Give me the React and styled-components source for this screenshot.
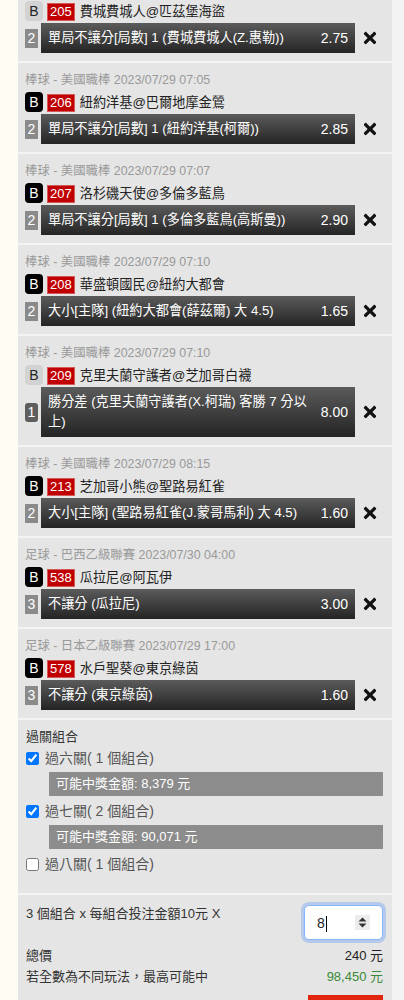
import React from 'react';
import styled, { createGlobalStyle } from 'styled-components';
import { FaTimes } from 'react-icons/fa';

const GlobalStyle = createGlobalStyle`
  body {
    margin: 0;
    background: #fffdf3;
    font-family: "Liberation Sans", "Noto Sans CJK TC", sans-serif;
  }
`;

const Page = styled.div`
  margin: -28px 0 0 18px;
  padding-right: 12px;
  background: #f3f3f3;
  min-height: 1100px;
`;

const Item = styled.div`
  background: #e5e5e5;
  padding: 8px 7px 8px 7px;
  margin-bottom: 2px;
`;

const League = styled.div`
  font-size: 12.4px;
  line-height: 18px;
  color: #999;
  white-space: nowrap;
`;

const Header = styled.div`
  display: flex;
  align-items: center;
  height: 21px;
  margin-top: 2px;
`;

const Badge = styled.span`
  display: flex;
  align-items: center;
  justify-content: center;
  width: 18px;
  height: 20px;
  border-radius: 4px;
  font-size: 14px;
  background: ${p => (p.$light ? '#d2d2d2' : '#000')};
  color: ${p => (p.$light ? '#222' : '#fff')};
`;

const GameNo = styled.span`
  box-sizing: border-box;
  min-width: 26px;
  height: 18px;
  margin: 2px 0 0 4px;
  padding: 0 2px;
  background: #c00000;
  border: 1px solid #d45a5a;
  color: #fff;
  font-size: 13px;
  line-height: 16px;
  text-align: center;
`;

const Team = styled.span`
  margin-left: 5px;
  font-size: 13.2px;
  color: #222;
`;

const BetRow = styled.div`
  display: flex;
  align-items: center;
  margin-top: 2px;
`;

const Seq = styled.span`
  flex: 0 0 13px;
  height: 19px;
  margin-right: 3px;
  display: flex;
  align-items: center;
  justify-content: center;
  font-size: 14px;
  color: #fff;
  background: ${p => (p.$dark ? '#5e5e5e' : '#8a8a8a')};
  border-radius: ${p => (p.$dark ? '3px' : '0')};
`;

const Bar = styled.div`
  box-sizing: border-box;
  flex: 0 0 314px;
  min-height: 30px;
  display: flex;
  align-items: center;
  padding: 5px 7px;
  background: linear-gradient(#5b5b5b, #242424);
  color: #fff;
  font-size: 13.2px;
  line-height: 20px;
`;

const BetText = styled.span`
  flex: 1;
`;

const Odds = styled.span`
  margin-left: 10px;
  font-size: 14px;
`;

const Remove = styled.span`
  flex: 1;
  display: flex;
  justify-content: center;
  color: #111;
`;

const Summary = styled.div`
  background: #e5e5e5;
  padding: 8px 9px 19px 8px;
  margin-bottom: 2px;
`;

const Title = styled.div`
  font-size: 13px;
  line-height: 18px;
  color: #333;
`;

const CheckRow = styled.label`
  display: flex;
  align-items: center;
  margin-top: 2px;
  font-size: 14px;
  line-height: 20px;
  color: #555;

  input {
    width: 13px;
    height: 13px;
    margin: 0 6px 0 0;
    accent-color: #0075ff;
  }
`;

const Amount = styled.div`
  margin: 4px 0 5px 23px;
  height: 24px;
  padding-left: 7px;
  background: #8c8c8c;
  color: #fff;
  font-size: 13px;
  line-height: 24px;
`;

const Bottom = styled.div`
  background: #e5e5e5;
  padding: 9px 9px 0 8px;
  display: flex;
  flex-direction: column;
  font-size: 13px;
  color: #333;
`;

const InputRow = styled.div`
  display: flex;
  justify-content: space-between;
  align-items: flex-start;
  line-height: 20px;
`;

const InputBox = styled.div`
  box-sizing: border-box;
  width: 79px;
  height: 35px;
  margin-top: 1px;
  padding: 0 12px;
  display: flex;
  align-items: center;
  justify-content: space-between;
  background: #fff;
  border: 1px solid #86b7fe;
  border-radius: 5px;
  box-shadow: 0 0 0 3px rgba(13, 110, 253, 0.22);
  font-size: 14px;
  color: #222;
`;

const Caret = styled.span`
  display: inline-block;
  width: 1px;
  height: 16px;
  margin-left: 1px;
  background: #000;
  vertical-align: middle;
`;

const Spinner = styled.span`
  display: flex;
  align-items: center;
  justify-content: center;
  width: 15px;
  height: 15px;
  background: #ececec;
`;

const Line = styled.div`
  display: flex;
  justify-content: space-between;
  line-height: 21px;
  margin-top: ${p => (p.$first ? '5px' : '0')};
`;

const Money = styled.span`
  color: ${p => (p.$green ? '#3a8a3a' : '#222')};
`;

const SubmitButton = styled.button`
  align-self: flex-end;
  width: 75px;
  height: 40px;
  margin-top: 8px;
  border: none;
  background: #e0260f;
`;

const bets = [
  { league: '棒球 - 美國職棒 2023/07/29 07:05', light: true, no: '205', team: '費城費城人@匹茲堡海盜', seq: '2', text: '單局不讓分[局數] 1 (費城費城人(Z.惠勒))', odds: '2.75' },
  { league: '棒球 - 美國職棒 2023/07/29 07:05', no: '206', team: '紐約洋基@巴爾地摩金鶯', seq: '2', text: '單局不讓分[局數] 1 (紐約洋基(柯爾))', odds: '2.85' },
  { league: '棒球 - 美國職棒 2023/07/29 07:07', no: '207', team: '洛杉磯天使@多倫多藍鳥', seq: '2', text: '單局不讓分[局數] 1 (多倫多藍鳥(高斯曼))', odds: '2.90' },
  { league: '棒球 - 美國職棒 2023/07/29 07:10', no: '208', team: '華盛頓國民@紐約大都會', seq: '2', text: '大小[主隊] (紐約大都會(薛茲爾) 大 4.5)', odds: '1.65' },
  { league: '棒球 - 美國職棒 2023/07/29 07:10', light: true, no: '209', team: '克里夫蘭守護者@芝加哥白襪', seq: '1', darkSeq: true, text: '勝分差 (克里夫蘭守護者(X.柯瑞) 客勝 7 分以上)', odds: '8.00' },
  { league: '棒球 - 美國職棒 2023/07/29 08:15', no: '213', team: '芝加哥小熊@聖路易紅雀', seq: '2', text: '大小[主隊] (聖路易紅雀(J.蒙哥馬利) 大 4.5)', odds: '1.60' },
  { league: '足球 - 巴西乙級聯賽 2023/07/30 04:00', no: '538', team: '瓜拉尼@阿瓦伊', seq: '3', text: '不讓分 (瓜拉尼)', odds: '3.00' },
  { league: '足球 - 日本乙級聯賽 2023/07/29 17:00', no: '578', team: '水戶聖葵@東京綠茵', seq: '3', text: '不讓分 (東京綠茵)', odds: '1.60' },
];

const combos = [
  { label: '過六關( 1 個組合)', checked: true, amount: '可能中獎金額: 8,379 元' },
  { label: '過七關( 2 個組合)', checked: true, amount: '可能中獎金額: 90,071 元' },
  { label: '過八關( 1 個組合)', checked: false },
];

export default function App() {
  return (
    <>
      <GlobalStyle />
      <Page>
        {bets.map(b => (
          <Item key={b.no}>
            <League>{b.league}</League>
            <Header>
              <Badge $light={b.light}>B</Badge>
              <GameNo>{b.no}</GameNo>
              <Team>{b.team}</Team>
            </Header>
            <BetRow>
              <Seq $dark={b.darkSeq}>{b.seq}</Seq>
              <Bar>
                <BetText>{b.text}</BetText>
                <Odds>{b.odds}</Odds>
              </Bar>
              <Remove>
                <FaTimes size={18} />
              </Remove>
            </BetRow>
          </Item>
        ))}

        <Summary>
          <Title>過關組合</Title>
          {combos.map(c => (
            <React.Fragment key={c.label}>
              <CheckRow>
                <input type="checkbox" defaultChecked={c.checked} />
                {c.label}
              </CheckRow>
              {c.amount && <Amount>{c.amount}</Amount>}
            </React.Fragment>
          ))}
        </Summary>

        <Bottom>
          <InputRow>
            <span>3 個組合 x 每組合投注金額10元 X</span>
            <InputBox>
              <span>
                8<Caret />
              </span>
              <Spinner>
                <svg width="9" height="11" viewBox="0 0 9 11">
                  <path d="M4.5 0.5 L8.5 4.5 H0.5 Z" fill="#333" />
                  <path d="M4.5 10.5 L8.5 6.5 H0.5 Z" fill="#333" />
                </svg>
              </Spinner>
            </InputBox>
          </InputRow>
          <Line $first>
            <span>總價</span>
            <Money>240 元</Money>
          </Line>
          <Line>
            <span>若全數為不同玩法，最高可能中</span>
            <Money $green>98,450 元</Money>
          </Line>
          <SubmitButton aria-label="投注" />
        </Bottom>
      </Page>
    </>
  );
}
